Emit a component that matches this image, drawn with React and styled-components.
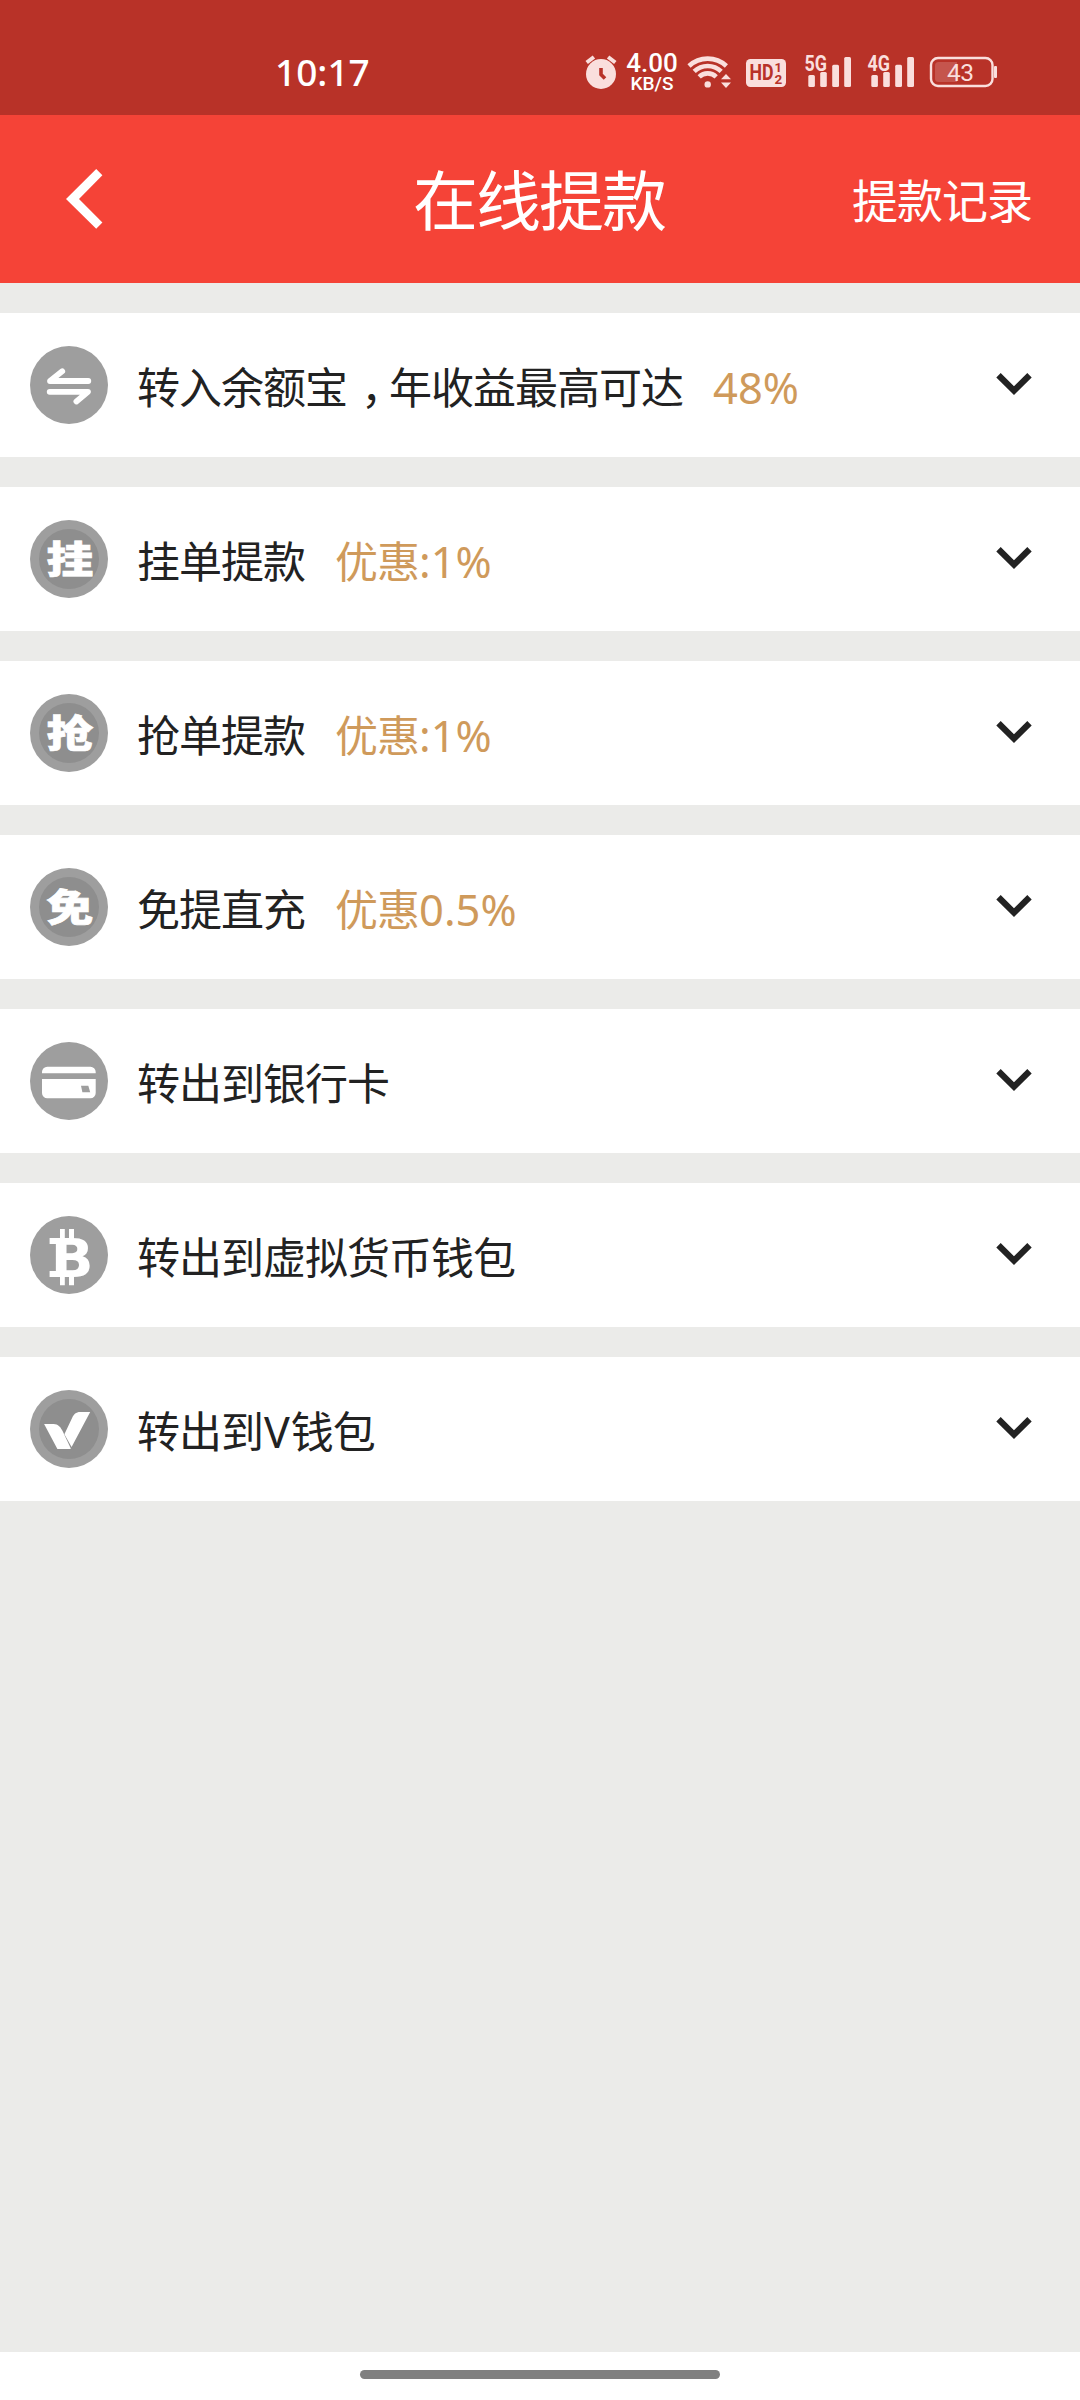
import React from 'react'
import styled, { createGlobalStyle } from 'styled-components'

const GlobalStyle = createGlobalStyle`
    body {
      margin: 0;
      background: #ebebe9;
      font-family: "Noto Sans", "Noto Sans CJK SC", sans-serif;
    }
`

const Page = styled.div`
    display: flex;
    flex-direction: column;
    width: 1080px;
    height: 2400px;
    background: #ebebe9;
`

const StatusBar = styled.div`
    display: flex;
    justify-content: space-between;
    box-sizing: border-box;
    height: 115px;
    padding: 50px 83px 0 275px;
    background: #b83228;
`

const Clock = styled.span`
    color: #fff;
    font-size: 37px;
    font-weight: 500;
    line-height: 44px;
`

const StatusIcons = styled.div`
    display: flex;
    height: 44px;
`

const Glyph = styled.svg`
    display: block;
    flex: none;
    margin-left: ${p => p.$gap || 0}px;
    overflow: visible;
    fill: #fadfdd;
`

const Speed = styled.div`
    display: flex;
    flex-direction: column;
    align-items: center;
    width: 52px;
    margin-left: 9px;
    color: #fff;
    font-family: Roboto, sans-serif;
    font-weight: 500;
    white-space: nowrap;
`

const SpeedValue = styled.span`
    padding-top: 2px;
    font-size: 26px;
    line-height: 23px;
`

const SpeedUnit = styled.span`
    font-size: 19px;
    line-height: 17px;
`

const NavBar = styled.div`
    display: grid;
    grid-template-columns: 1fr auto 1fr;
    align-items: center;
    box-sizing: border-box;
    height: 168px;
    padding: 0 48px 0 66px;
    background: #f54337;
    color: #fff;
`

const NavTitle = styled.h1`
    margin: 0 0 0 -20px;
    padding-top: 2px;
    font-size: 65px;
    letter-spacing: -2px;
    font-weight: 400;
    line-height: 80px;
`

const NavLink = styled.span`
    justify-self: end;
    padding-top: 2px;
    font-size: 46px;
    letter-spacing: -1px;
    line-height: 60px;
`

const List = styled.div`
    display: flex;
    flex: 1;
    flex-direction: column;
    gap: 30px;
    padding-top: 30px;
`

const Row = styled.div`
    display: flex;
    align-items: center;
    box-sizing: border-box;
    height: 144px;
    padding: 0 48px 0 30px;
    background: #fff;
    color: #222;
    font-size: 43px;
    letter-spacing: -1px;
    line-height: 60px;
    white-space: nowrap;
`

const Label = styled.span`
    margin-left: 29px;
    padding-top: 6px;
`

/* half-width form, centred in a full-width cell */
const Comma = styled.span`
    display: inline-block;
    width: 28px;
    padding-left: 14px;
    font-family: "Noto Sans CJK SC", sans-serif;
    font-feature-settings: "halt";
    line-height: 1;
`

const Latin = styled.span`
    margin: 0 2px 0 1px;
`

const Promo = styled.span`
    margin-left: 30px;
    padding-top: 4px;
    color: #cf9a5b;
`

const Figure = styled.span`
    font-size: 43.5px;
    letter-spacing: 0;
`

const Arrow = styled.svg`
    display: block;
    margin: -3px 0 0 auto;
    fill: #222;
`

const HomeBar = styled.div`
    display: flex;
    justify-content: center;
    box-sizing: border-box;
    height: 48px;
    padding-top: 18px;
    background: #fff;
`

const HomeHandle = styled.div`
    width: 360px;
    height: 9px;
    border-radius: 5px;
    background: #808080;
`

const Disc = ({ ring, children }) => (
    <svg width="78" height="78" viewBox="0 0 78 78" fill="#fff">
      <circle cx="39" cy="39" r="39" fill="#9e9e9e" />
      {ring && <circle cx="39" cy="39" r="30" fill="#8e8e8e" />}
      {children}
    </svg>
)

const CharIcon = ({ char }) => (
    <Disc ring>
      <text
        transform="translate(40 53) scale(1.04 .84)"
        textAnchor="middle"
        fontFamily="Noto Sans CJK SC, sans-serif"
        fontWeight="900"
        fontSize="45"
        letterSpacing="0"
        stroke="#fff"
        strokeWidth=".8"
      >{char}</text>
    </Disc>
)

const TransferIcon = () => (
    <Disc>
      <path
        d="M58.3 35H20L32.2 25.2M19.7 45.8H58L46.4 55.5"
        fill="none"
        stroke="#fff"
        strokeWidth="5.8"
        strokeLinecap="round"
        strokeLinejoin="round"
      />
    </Disc>
)

const CardIcon = () => (
    <Disc>
      <path d="M12 31.3V30a5.3 5.3 0 0 1 5.3-5.3h43.1a5.3 5.3 0 0 1 5.3 5.3v1.3z" />
      <path d="M12 37h53.7v14a5.3 5.3 0 0 1-5.3 5.3H17.3A5.3 5.3 0 0 1 12 51z" />
      <path d="M51 43.8h7.3l1.9 6.4h-7.8z" fill="#9e9e9e" />
    </Disc>
)

const BitcoinIcon = () => (
    <Disc>
      <text
        transform="translate(20.8 61) scale(1.05 1)"
        fontFamily="DejaVu Sans, sans-serif"
        fontWeight="700"
        fontSize="53.5"
        letterSpacing="0"
      >B</text>
      <path d="M19.6 22h10v6h-10zM19.6 55h10v6h-10z" />
      <path d="M30 13h4.8v11H30zM39 13h5v11h-5zM30 58h4.8v11.3H30zM39 58h5v11.3h-5z" />
    </Disc>
)

const VIcon = () => (
    <Disc ring>
      <path d="M14.1 34h9.5c4.5 0 7.2 3.4 9.2 7.6L40.6 58v1H27.4z" />
      <path d="M34.4 44.3l7.8-16.5c1.6-3.4 3.6-5.8 8-5.8h10L41.6 57z" />
    </Disc>
)

const AlarmIcon = () => (
    <Glyph width="32" height="44" viewBox="585 50 32 44">
      <circle cx="601" cy="74" r="15" />
      <path d="M586.7 62.5l7.2-5.5M608.1 57l7.2 5.5" stroke="#fadfdd" strokeWidth="4" />
      <path d="M601 68v6.5l4 4" fill="none" stroke="#b83228" strokeWidth="3.6" />
    </Glyph>
)

const WifiIcon = () => (
    <Glyph $gap={10} width="44" height="44" viewBox="688 50 44 44">
      <g fill="none" stroke="#fadfdd" strokeWidth="4.6">
        <path d="M689 66a27.4 27.4 0 0 1 37.4 0" />
        <path d="M694.2 71.4a19.6 19.6 0 0 1 27 0" />
        <path d="M699.2 76.8a12.2 12.2 0 0 1 17 0" />
      </g>
      <circle cx="707.7" cy="84.4" r="3.2" />
      <path d="M721 79.2l5-5.2 5 5.2zM721 82.6h10l-5 5.4z" stroke="#b83228" strokeWidth="3" paintOrder="stroke" />
    </Glyph>
)

const HdIcon = () => (
    <Glyph $gap={14} width="40" height="44" viewBox="746 50 40 44">
      <rect x="746" y="59" width="40" height="28" rx="4.5" />
      <g fill="#b83228" fontFamily="Roboto, sans-serif" fontWeight="700">
        <text x="749.5" y="80.3" fontSize="21.5" textLength="24" lengthAdjust="spacingAndGlyphs">HD</text>
        <text x="774.6" y="72.3" fontSize="13">1</text>
        <text x="774.6" y="83.8" fontSize="13.5">2</text>
      </g>
    </Glyph>
)

const SignalIcon = ({ label, gap }) => (
    <Glyph $gap={gap} width="46" height="44" viewBox="805 50 46 44">
      <text
        x="804.6"
        y="70.6"
        fontFamily="Roboto, sans-serif"
        fontWeight="700"
        fontSize="21.5"
        textLength="22.5"
        lengthAdjust="spacingAndGlyphs"
      >{label}</text>
      <rect x="808.3" y="75" width="6.6" height="12" rx="1.5" />
      <rect x="820.2" y="72" width="6.6" height="15" rx="1.5" />
      <rect x="832.2" y="64.7" width="6.8" height="22.3" rx="1.5" />
      <rect x="844.2" y="57" width="6.8" height="30" rx="1.5" />
    </Glyph>
)

const BatteryIcon = () => (
    <Glyph $gap={16} width="67" height="44" viewBox="930 50 67 44">
      <rect x="931" y="58" width="61.5" height="28" rx="7" fill="none" stroke="#fadfdd" strokeWidth="2.4" />
      <path d="M957 62v20h-18.5a3.500 3.500 0 0 1-3.500-3.500v-13a3.500 3.500 0 0 1 3.500-3.500z" fill="#c5554d" />
      <rect x="994" y="66" width="3" height="12" rx="1" />
      <text x="947" y="81.3" fontFamily="Roboto, sans-serif" fontSize="24.5" textLength="27">43</text>
    </Glyph>
)

const BackIcon = () => (
    <svg width="37" height="60" viewBox="66 169 37 60" fill="#fff">
      <path d="M66 199l30.2-30 6.2 6.3L79 199l23.4 23.4-6.2 6.3z" />
    </svg>
)

const rows = [
    {
      icon: <TransferIcon />,
      label: <>转入余额宝<Comma>{'\uff0c'}</Comma>年收益最高可达</>,
      figure: '48%',
    },
    { icon: <CharIcon char="挂" />, label: '挂单提款', promo: '优惠', figure: ':1%' },
    { icon: <CharIcon char="抢" />, label: '抢单提款', promo: '优惠', figure: ':1%' },
    { icon: <CharIcon char="免" />, label: '免提直充', promo: '优惠', figure: '0.5%' },
    { icon: <CardIcon />, label: '转出到银行卡' },
    { icon: <BitcoinIcon />, label: '转出到虚拟货币钱包' },
    { icon: <VIcon />, label: <>转出到<Latin>V</Latin>钱包</> },
]

export default function App() {
    return (
      <Page>
        <GlobalStyle />
        <StatusBar>
          <Clock>10:17</Clock>
          <StatusIcons>
            <AlarmIcon />
            <Speed>
              <SpeedValue>4.00</SpeedValue>
              <SpeedUnit>KB/S</SpeedUnit>
            </Speed>
            <WifiIcon />
            <HdIcon />
            <SignalIcon label="5G" gap={19} />
            <SignalIcon label="4G" gap={17} />
            <BatteryIcon />
          </StatusIcons>
        </StatusBar>
        <NavBar>
          <BackIcon />
          <NavTitle>在线提款</NavTitle>
          <NavLink>提款记录</NavLink>
        </NavBar>
        <List>
          {rows.map((row, i) => (
            <Row key={i}>
              {row.icon}
              <Label>{row.label}</Label>
              {row.figure && <Promo>{row.promo}<Figure>{row.figure}</Figure></Promo>}
              <Arrow width="36" height="22" viewBox="0 0 36 22">
                <path d="M.3 4.4L4.7 0 18 13.2 31.3 0l4.400 4.4L18 22z" />
              </Arrow>
            </Row>
          ))}
        </List>
        <HomeBar>
          <HomeHandle />
        </HomeBar>
      </Page>
    )
}
